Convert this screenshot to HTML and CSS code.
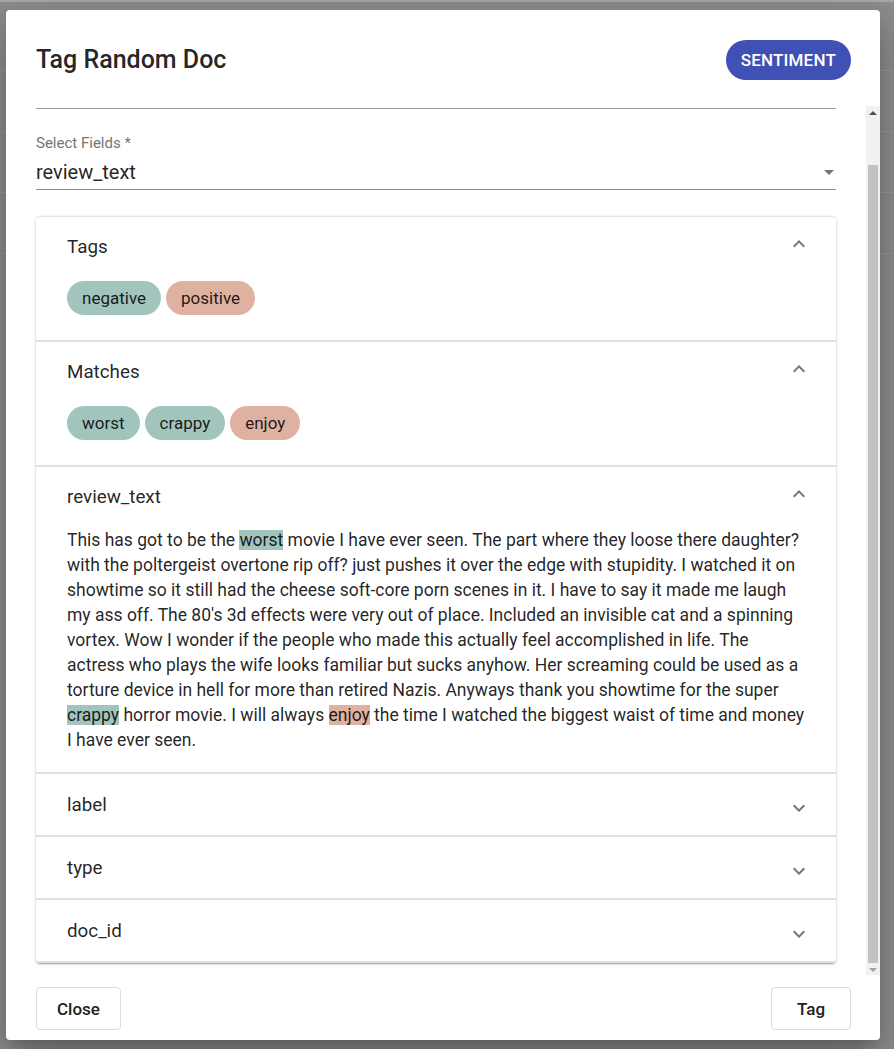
FILE: index.html
```html
<!DOCTYPE html>
<html lang="en">
<head>
<meta charset="utf-8">
<title>Tag Random Doc</title>
<link rel="stylesheet" href="styles.css">
</head>
<body>
<div class="page">
  <div class="page-top"></div>
  <div class="page-row"></div>
  <div class="page-row"></div>
  <div class="page-row"></div>
  <div class="page-row"></div>
</div>
<div class="dialog">
  <div class="dialog-head">
    <h1 class="dialog-title">Tag Random Doc</h1>
    <button class="pill-btn">SENTIMENT</button>
  </div>
  <div class="dialog-body">
    <div class="scroll-content">
      <div class="top-line"></div>
      <div class="select-field">
        <div class="select-label">Select Fields *</div>
        <div class="select-input">
          <span class="select-value">review_text</span>
          <svg class="select-caret" width="24" height="24" viewBox="0 0 24 24"><path d="M7 10l5 5 5-5z"/></svg>
        </div>
      </div>
      <div class="accordion">
        <section class="acc-item">
          <div class="acc-head">
            <span class="acc-title">Tags</span>
            <svg class="acc-icon up" width="24" height="24" viewBox="0 0 24 24"><path d="M16.59 8.59 12 13.17 7.41 8.59 6 10l6 6 6-6z"/></svg>
          </div>
          <div class="chips">
            <span class="chip neg">negative</span>
            <span class="chip pos">positive</span>
          </div>
        </section>
        <section class="acc-item">
          <div class="acc-head">
            <span class="acc-title">Matches</span>
            <svg class="acc-icon up" width="24" height="24" viewBox="0 0 24 24"><path d="M16.59 8.59 12 13.17 7.41 8.59 6 10l6 6 6-6z"/></svg>
          </div>
          <div class="chips">
            <span class="chip neg">worst</span>
            <span class="chip neg">crappy</span>
            <span class="chip pos">enjoy</span>
          </div>
        </section>
        <section class="acc-item">
          <div class="acc-head">
            <span class="acc-title">review_text</span>
            <svg class="acc-icon up" width="24" height="24" viewBox="0 0 24 24"><path d="M16.59 8.59 12 13.17 7.41 8.59 6 10l6 6 6-6z"/></svg>
          </div>
          <p class="doc-text">This has got to be the <mark class="hl neg">worst</mark> movie I have ever seen. The part where they loose there daughter? with the poltergeist overtone rip off? just pushes it over the edge with stupidity. I watched it on showtime so it still had the cheese soft-core porn scenes in it. I have to say it made me laugh my ass off. The 80's 3d effects were very out of place. Included an invisible cat and a spinning vortex. Wow I wonder if the people who made this actually feel accomplished in life. The actress who plays the wife looks familiar but sucks anyhow. Her screaming could be used as a torture device in hell for more than retired Nazis. Anyways thank you showtime for the super <mark class="hl neg">crappy</mark> horror movie. I will always <mark class="hl pos">enjoy</mark> the time I watched the biggest waist of time and money I have ever seen.</p>
        </section>
        <section class="acc-item collapsed">
          <div class="acc-head">
            <span class="acc-title">label</span>
            <svg class="acc-icon" width="24" height="24" viewBox="0 0 24 24"><path d="M16.59 8.59 12 13.17 7.41 8.59 6 10l6 6 6-6z"/></svg>
          </div>
        </section>
        <section class="acc-item collapsed">
          <div class="acc-head">
            <span class="acc-title">type</span>
            <svg class="acc-icon" width="24" height="24" viewBox="0 0 24 24"><path d="M16.59 8.59 12 13.17 7.41 8.59 6 10l6 6 6-6z"/></svg>
          </div>
        </section>
        <section class="acc-item collapsed">
          <div class="acc-head">
            <span class="acc-title">doc_id</span>
            <svg class="acc-icon" width="24" height="24" viewBox="0 0 24 24"><path d="M16.59 8.59 12 13.17 7.41 8.59 6 10l6 6 6-6z"/></svg>
          </div>
        </section>
      </div>
    </div>
    <div class="scrollbar">
      <div class="sb-arrow sb-up"></div>
      <div class="sb-track"><div class="sb-thumb"></div></div>
      <div class="sb-arrow sb-down"></div>
    </div>
  </div>
  <div class="dialog-foot">
    <button class="out-btn">Close</button>
    <button class="out-btn">Tag</button>
  </div>
</div>
</body>
</html>
```
FILE: styles.css
```css
* { box-sizing: border-box; }
html, body { margin: 0; padding: 0; }
body {
  width: 894px;
  height: 1049px;
  overflow: hidden;
  background: #8e8e8e;
  font-family: Roboto, "Liberation Sans", Arial, sans-serif;
  color: rgba(0,0,0,0.87);
  position: relative;
}
.page { display: flex; flex-direction: column; }
.page-top { height: 2px; background: #a9a9a9; margin-bottom: 68px; }
.page-row { height: 61px; border-top: 1px solid #9a9a9a; }

.dialog {
  position: absolute;
  left: 6px;
  top: 10px;
  width: 874px;
  height: 1030px;
  background: #fff;
  border-radius: 4px;
  display: flex;
  flex-direction: column;
  box-shadow: 0 11px 15px -7px rgba(0,0,0,0.2), 0 24px 38px 3px rgba(0,0,0,0.14), 0 9px 46px 8px rgba(0,0,0,0.12);
}
.dialog-head {
  height: 96px;
  padding: 30px 29px 0 30px;
  display: flex;
  justify-content: space-between;
  align-items: flex-start;
}
.dialog-title {
  margin: 0;
  font-size: 25px;
  font-weight: 500;
  line-height: 40px;
  letter-spacing: 0;
}
.pill-btn {
  height: 40px;
  padding: 0 15px;
  border: none;
  border-radius: 20px;
  background: #3f51b5;
  color: #fff;
  font-family: inherit;
  font-size: 17px;
  font-weight: 500;
  letter-spacing: 0.2px;
}
.dialog-body {
  height: 869px;
  display: flex;
}
.scroll-content {
  flex: 1;
  overflow: hidden;
  padding: 0 30px;
}
.top-line { margin-top: 2px; border-top: 1px solid #9b9b9b; }
.select-field { margin-top: 26px; }
.select-label {
  font-size: 15px;
  line-height: 16px;
  color: #757575;
}
.select-input {
  margin-top: 6px;
  height: 33px;
  display: flex;
  align-items: center;
  justify-content: space-between;
  border-bottom: 1px solid #8c8c8c;
  padding-bottom: 3px;
}
.select-value { font-size: 20px; line-height: 24px; }
.select-caret { fill: #757575; margin-right: -5px; }

.accordion {
  margin-top: 26px;
  border-radius: 4px;
  box-shadow: 0 1px 3px rgba(0,0,0,0.2), 0 1px 1px rgba(0,0,0,0.14), 0 2px 1px -1px rgba(0,0,0,0.12);
}
.acc-item { border-top: 2px solid #e0e0e0; }
.acc-item:first-child { border-top: 1px solid #e6e6e6; border-radius: 4px 4px 0 0; }
.acc-item:last-child { border-bottom: 2px solid #e0e0e0; }
.acc-head {
  display: flex;
  justify-content: space-between;
  align-items: center;
  padding: 19px 25px 0 31px;
  height: 41px;
}
.collapsed .acc-head { height: 61px; padding-top: 0; }
.collapsed .acc-icon { margin-top: 6px; }
.acc-title { font-size: 18.8px; line-height: 22px; }
.acc-icon { fill: #757575; }
.acc-icon.up { transform: rotate(180deg); margin-top: -6px; }

.chips {
  display: flex;
  gap: 5px;
  padding: 23px 31px 25px;
}
.chip {
  height: 34px;
  padding: 0 15px;
  border-radius: 17px;
  font-size: 17px;
  line-height: 34px;
  color: rgba(0,0,0,0.87);
}
.neg { background: #a1c5bc; }
.pos { background: #dfb1a0; }
.doc-text {
  margin: 0;
  padding: 20px 31px 19px 31px;
  font-size: 17.5px;
  line-height: 25px;
}
.hl { color: inherit; }

.scrollbar {
  width: 14px;
  background: #f1f1f1;
  display: flex;
  flex-direction: column;
}
.sb-arrow { height: 14px; position: relative; }
.sb-up::after {
  content: "";
  position: absolute;
  left: 3px; top: 5px;
  border-left: 4px solid transparent;
  border-right: 4px solid transparent;
  border-bottom: 4px solid #505050;
}
.sb-down::after {
  content: "";
  position: absolute;
  left: 3px; top: 5px;
  border-left: 4px solid transparent;
  border-right: 4px solid transparent;
  border-top: 4px solid #a3a3a3;
}
.sb-track { flex: 1; padding: 47px 2px 0 2px; }
.sb-thumb { height: 798px; background: #c1c1c1; }

.dialog-foot {
  flex: 1;
  display: flex;
  justify-content: space-between;
  padding: 12px 29px 0 30px;
}
.out-btn {
  height: 43px;
  min-width: 80px;
  padding: 0 20px;
  background: #fff;
  border: 1px solid #dcdcdc;
  border-radius: 4px;
  font-family: inherit;
  font-size: 17px;
  font-weight: 500;
  color: #222;
}
```
